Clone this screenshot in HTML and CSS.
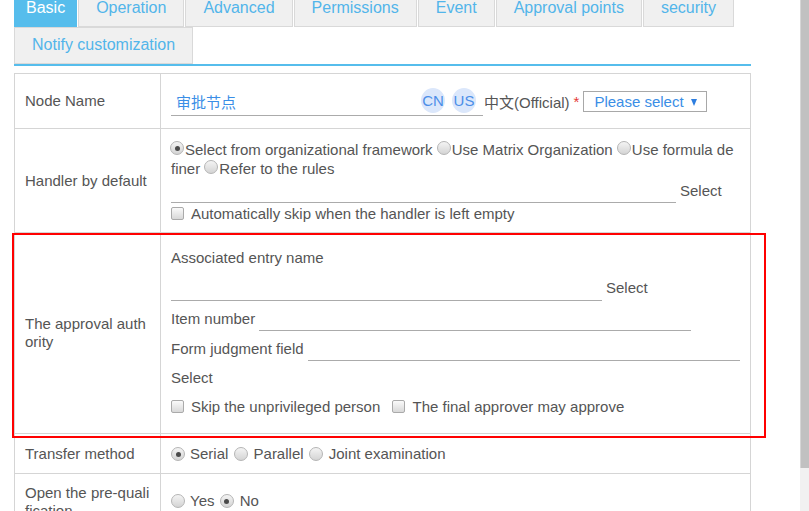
FILE: index.html
```html
<!DOCTYPE html>
<html>
<head>
<meta charset="utf-8">
<link rel="stylesheet" href="styles.css">
</head>
<body>
<div class="main">
  <div class="tabs">
    <div class="tab active">Basic</div>
    <div class="tab">Operation</div>
    <div class="tab">Advanced</div>
    <div class="tab">Permissions</div>
    <div class="tab">Event</div>
    <div class="tab">Approval points</div>
    <div class="tab">security</div>
    <div class="tab">Notify customization</div>
  </div>

  <div class="form">
    <div class="label row-name">Node Name</div>
    <div class="field row-name name-field">
      <div class="name-input">
        <span class="name-text">审批节点</span>
        <span class="lang">CN</span>
        <span class="lang">US</span>
      </div>
      <span class="lang-label">中文(Official)</span>
      <span class="req">*</span>
      <div class="select"><span>Please select</span><span class="caret"></span></div>
    </div>

    <div class="label">Handler by default</div>
    <div class="field handler">
      <div class="radios"><span class="radio checked"></span>Select from organizational framework <span class="radio"></span>Use Matrix Organization <span class="radio"></span>Use formula definer <span class="radio"></span>Refer to the rules</div>
      <div class="pick-line">
        <div class="line-input w505"></div>
        <span class="pick">Select</span>
      </div>
      <div class="check-line"><span class="checkbox"></span>Automatically skip when the handler is left empty</div>
    </div>

    <div class="label">The approval authority</div>
    <div class="field authority">
      <div class="text-line">Associated entry name</div>
      <div class="assoc-line">
        <div class="line-input w431"></div>
        <span class="pick">Select</span>
      </div>
      <div class="labeled-line">
        <span class="inline-label">Item number</span>
        <div class="line-input w432"></div>
      </div>
      <div class="labeled-line">
        <span class="inline-label">Form judgment field</span>
        <div class="line-input w432"></div>
      </div>
      <div class="text-line select-text">Select</div>
      <div class="check-line checks"><span class="checkbox"></span>Skip the unprivileged person <span class="checkbox second"></span>The final approver may approve</div>
    </div>

    <div class="label row-transfer">Transfer method</div>
    <div class="field row-transfer options"><span class="radio checked"></span>Serial <span class="radio"></span>Parallel <span class="radio"></span>Joint examination</div>

    <div class="label row-prequal">Open the pre-qualification</div>
    <div class="field row-prequal options prequal"><span class="radio"></span>Yes <span class="radio checked"></span>No</div>
  </div>
</div>
<div class="scrollbar"><div class="thumb"></div></div>
<div class="highlight"></div>
</body>
</html>
```

FILE: styles.css
```css
html, body {
  margin: 0;
  padding: 0;
  height: 511px;
  overflow: hidden;
  background: #fff;
}

body {
  display: flex;
  font-family: "Liberation Sans", Arial, "Noto Sans CJK SC", sans-serif;
  font-size: 15px;
  color: #555;
  position: relative;
}

.main {
  flex: 1;
  padding-left: 14px;
}

.scrollbar {
  width: 9px;
  height: 511px;
  background: #f1f1f1;
  display: flex;
  flex-direction: column;
}

.thumb {
  height: 468px;
  background: #c1c1c1;
  border-left: 1px solid #d6d6d6;
}

/* tabs */
.tabs {
  width: 737px;
  margin-top: -10px;
  display: flex;
  flex-wrap: wrap;
  border-bottom: 2px solid #56bdec;
}

.tab {
  height: 35px;
  line-height: 34px;
  padding: 0 17px;
  margin-right: 1px;
  border: 1px solid #d9d9d9;
  background: #f0f0f0;
  color: #52b5ea;
  font-size: 16px;
  white-space: nowrap;
}

.tab.active {
  background: #56bdec;
  border-color: #56bdec;
  color: #fff;
  padding: 0 11px;
}

/* form grid */
.form {
  width: 736px;
  margin-top: 7px;
  display: grid;
  grid-template-columns: 146px 1fr;
  border-top: 1px solid #d5d5d5;
  border-left: 1px solid #d5d5d5;
}

.label, .field {
  border-right: 1px solid #d5d5d5;
  border-bottom: 1px solid #d5d5d5;
}

.label {
  padding: 0 10px;
  display: flex;
  align-items: center;
  line-height: 18px;
  word-break: break-all;
}

.field {
  padding: 0 10px;
}

.row-name { height: 54px; }
.row-transfer { height: 39px; }
.row-prequal { height: 56px; }

/* row 1 */
.name-field {
  display: flex;
  align-items: center;
}

.name-input {
  width: 312px;
  height: 30px;
  box-sizing: border-box;
  border-bottom: 1px solid #ababab;
  display: flex;
  align-items: center;
  padding-left: 5px;
  padding-right: 7px;
  gap: 7px;
}

.name-text {
  flex: 1;
  color: #3a8ee6;
  font-family: "Noto Sans CJK SC", "Liberation Sans", sans-serif;
  font-size: 15px;
  margin-top: 2px;
}

.lang {
  width: 24px;
  height: 25px;
  border-radius: 50%;
  background: #dbe7fb;
  color: #4b8ee8;
  display: flex;
  align-items: center;
  justify-content: center;
  font-size: 15px;
  margin-top: -1px;
}

.lang-label {
  margin-left: 1px;
  font-family: "Liberation Sans", "Noto Sans CJK SC", sans-serif;
}

.req {
  color: #e53935;
  margin-left: 4px;
}

.select {
  margin-left: 4px;
  width: 124px;
  height: 21px;
  box-sizing: border-box;
  border: 1px solid #a8a8a8;
  display: flex;
  align-items: center;
  justify-content: space-between;
  padding: 0 9px 0 10px;
  color: #3a8ee6;
  margin-top: 1px;
}

.caret {
  width: 0;
  height: 0;
  border-left: 3.5px solid transparent;
  border-right: 3.5px solid transparent;
  border-top: 7px solid #2d7ee0;
  margin-top: 1px;
}

/* controls */
.radio {
  display: inline-block;
  width: 12px;
  height: 12px;
  border: 1px solid #b5b5b5;
  border-radius: 50%;
  background: linear-gradient(#f4f4f4, #d4d4d4);
  vertical-align: 0;
  margin-right: 1px;
  position: relative;
  box-sizing: content-box;
}

.radio.checked::after {
  content: "";
  position: absolute;
  left: 3.5px;
  top: 3.5px;
  width: 5px;
  height: 5px;
  border-radius: 50%;
  background: #4a4a4a;
}

.checkbox {
  display: inline-block;
  width: 11px;
  height: 11px;
  border: 1px solid #aaa;
  border-radius: 2px;
  background: linear-gradient(#fafafa, #d8d8d8);
  vertical-align: -1px;
  margin-right: 7px;
}

.checkbox.second {
  margin-left: 8px;
}

.line-input {
  height: 22px;
  border-bottom: 1px solid #ababab;
  flex: none;
}

.w505 { width: 505px; }
.w431 { width: 431px; }
.w432 { width: 432px; }

.pick {
  margin-left: 4px;
}

/* handler row */
.handler {
  padding-top: 11px;
  padding-bottom: 9px;
}

.radios {
  line-height: 19px;
  word-break: break-all;
  margin-right: 3px;
}

.radios .radio:first-child {
  margin-left: -1px;
}

.pick-line {
  display: flex;
  align-items: center;
  height: 25px;
}

.pick-line .line-input {
  height: 24px;
}

.check-line {
  line-height: 19px;
  margin-top: 1px;
}

/* authority row */
.authority {
  padding-top: 15px;
  padding-bottom: 17px;
}

.text-line {
  line-height: 19px;
}

.assoc-line {
  display: flex;
  align-items: flex-end;
  height: 34px;
}

.assoc-line .pick {
  line-height: 19px;
  margin-bottom: 4px;
}

.labeled-line {
  display: flex;
  align-items: flex-end;
  height: 30px;
}

.inline-label {
  line-height: 19px;
  margin-bottom: 3px;
  margin-right: 4px;
}

.select-text {
  margin-top: 7px;
}

.checks {
  margin-top: 10px;
}

/* option rows */
.options {
  display: flex;
  align-items: center;
  white-space: pre;
}

.options .radio {
  margin: 1px 6px 0 1px;
}

.options .radio:first-child {
  margin-left: 0;
  margin-right: 5px;
}

.prequal {
  padding-bottom: 2px;
  box-sizing: border-box;
}

/* annotation */
.highlight {
  position: absolute;
  left: 12px;
  top: 233px;
  width: 750px;
  height: 201px;
  border: 2px solid #f00;
  pointer-events: none;
}
```
